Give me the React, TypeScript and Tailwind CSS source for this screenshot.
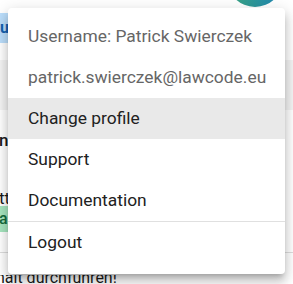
import React from "react";

export default function App() {
  const items = [
    { label: "Change profile", active: true },
    { label: "Support" },
    { label: "Documentation" },
  ];
  return (
    <div
      className="relative w-[293px] h-[284px] overflow-hidden bg-white"
      style={{ fontFamily: "Roboto, 'Liberation Sans', sans-serif" }}
    >
      {/* underlying page */}
      <div className="flex flex-col">
        <div className="flex h-[7px] justify-end">
          <div className="-mt-[49px] mr-[10px] h-[56px] w-[56px] shrink-0 rounded-full bg-gradient-to-r from-[#3ea67c] to-[#1f84b5]" />
        </div>
        <div className="mt-[6px] flex h-[30px] w-[80px] items-center bg-[#bbdefb]">
          <span className="text-[16px] font-bold text-[#1562b0]">u</span>
        </div>
        <div className="mt-[17px] h-[50px] bg-[#f4f4f4]" />
        <div className="mt-[18px] h-[24px] -ml-[1px] text-[17px] font-medium leading-[24px] text-[#1a1a1a]">
          n
        </div>
        <div className="mt-[38px] h-[16px] -ml-[1px] text-[17px] leading-[16px] text-[#1a1a1a]">
          tt
        </div>
        <div className="flex h-[26px] w-[80px] items-center bg-[#a6e6bf]">
          <span className="-ml-[1px] text-[16px] font-medium text-[#146c3c]">a</span>
        </div>
        <div className="mt-[20px] h-[1px] bg-[#dddddd]" />
        <div className="mt-[22px] h-[11px] overflow-hidden">
          <div className="-mt-[9px] -ml-[4px] whitespace-nowrap text-[16px] leading-[24px] text-[#1a1a1a]">
            halt durchführen!
          </div>
        </div>
      </div>

      {/* dropdown menu overlay */}
      <div className="absolute left-[8px] top-[8px] w-[277px] rounded-[4px] bg-white pt-[8px] pb-[11px] shadow-[0px_5px_5px_-3px_rgba(0,0,0,0.2),0px_8px_10px_1px_rgba(0,0,0,0.14),0px_3px_14px_2px_rgba(0,0,0,0.12)]">
        <div className="flex h-[41px] items-center pl-[20px] text-[17.4px] text-[#666666]">
          Username: Patrick Swierczek
        </div>
        <div className="flex h-[41px] items-center pl-[20px] text-[17.4px] text-[#666666]">
          patrick.swierczek@lawcode.eu
        </div>
        {items.map((it) => (
          <div
            key={it.label}
            className={
              it.active
                ? "flex h-[41px] items-center bg-[#e9e9e9] pl-[20px] text-[17.4px] text-[#212121]"
                : "flex h-[41px] items-center pl-[20px] text-[17.4px] text-[#212121]"
            }
          >
            {it.label}
          </div>
        ))}
        <div className="h-[1px] bg-[#e0e0e0]" />
        <div className="flex h-[41px] items-center pl-[20px] text-[17.4px] text-[#212121]">
          Logout
        </div>
      </div>
    </div>
  );
}
